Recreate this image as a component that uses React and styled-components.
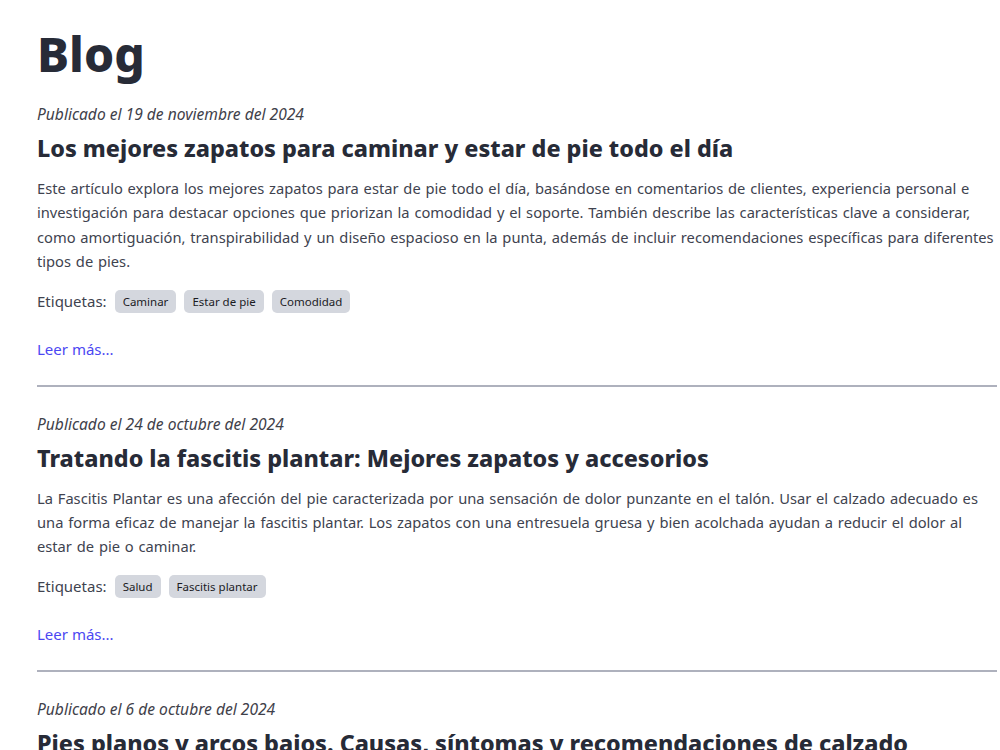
import React from 'react'
import styled, { createGlobalStyle } from 'styled-components'

const GlobalStyle = createGlobalStyle`
  html, body {
    margin: 0;
    padding: 0;
    background: #ffffff;
    overflow-x: hidden;
  }
  body {
    font-family: "Noto Sans", "Open Sans", sans-serif;
  }
`

const Page = styled.main`
  width: 960px;
  padding: 22px 0 0 37px;
`

const PageTitle = styled.h1`
  margin: 0 0 16px;
  font-size: 48px;
  line-height: 64px;
  font-weight: 800;
  color: #272b37;
`

const Post = styled.article`
  border-bottom: ${(p) => (p.$last ? 'none' : '2px solid #aeb1bd')};
  padding-bottom: 24px;
  margin-bottom: 25px;
`

const PostDate = styled.p`
  margin: 0;
  font-size: 15.6px;
  line-height: 24px;
  font-style: italic;
  color: #3f414a;
`

const PostTitle = styled.h2`
  margin: 6px 0 12px;
  font-size: 23.3px;
  line-height: 32px;
  font-weight: 800;
  color: #272b37;
`

const Summary = styled.p`
  margin: 0 0 16px;
  font-size: 14.7px;
  line-height: 24.4px;
  word-spacing: 1px;
  color: #40434f;
`

const TagRow = styled.div`
  display: flex;
  align-items: center;
  gap: 8px;
  font-size: 15px;
  color: #40434f;
`

const Tag = styled.span`
  display: inline-block;
  padding: 3px 8px;
  border-radius: 5px;
  background: #d4d7de;
  color: #1b1b1f;
  font-size: 11.5px;
  line-height: 17px;
`

const ReadMore = styled.a`
  display: inline-block;
  margin-top: 24px;
  font-size: 15px;
  line-height: 24px;
  color: #4b47f2;
  text-decoration: none;
`

const posts = [
  {
    date: 'Publicado el 19 de noviembre del 2024',
    title: 'Los mejores zapatos para caminar y estar de pie todo el día',
    summary:
      'Este artículo explora los mejores zapatos para estar de pie todo el día, basándose en comentarios de clientes, experiencia personal e investigación para destacar opciones que priorizan la comodidad y el soporte. También describe las características clave a considerar, como amortiguación, transpirabilidad y un diseño espacioso en la punta, además de incluir recomendaciones específicas para diferentes tipos de pies.',
    tags: ['Caminar', 'Estar de pie', 'Comodidad'],
  },
  {
    date: 'Publicado el 24 de octubre del 2024',
    title: 'Tratando la fascitis plantar: Mejores zapatos y accesorios',
    summary:
      'La Fascitis Plantar es una afección del pie caracterizada por una sensación de dolor punzante en el talón. Usar el calzado adecuado es una forma eficaz de manejar la fascitis plantar. Los zapatos con una entresuela gruesa y bien acolchada ayudan a reducir el dolor al estar de pie o caminar.',
    tags: ['Salud', 'Fascitis plantar'],
  },
  {
    date: 'Publicado el 6 de octubre del 2024',
    title: 'Pies planos y arcos bajos. Causas, síntomas y recomendaciones de calzado',
    summary:
      'Los pies planos son una condición común en la que el arco del pie se aplana total o parcialmente. Conocer sus causas y síntomas ayuda a elegir el calzado con el soporte adecuado.',
    tags: ['Salud', 'Pies planos'],
  },
]

export default function App() {
  return (
    <>
      <GlobalStyle />
      <Page>
        <PageTitle>Blog</PageTitle>
        {posts.map((post, i) => (
          <Post key={post.date} $last={i === posts.length - 1}>
            <PostDate>{post.date}</PostDate>
            <PostTitle>{post.title}</PostTitle>
            <Summary>{post.summary}</Summary>
            <TagRow>
              Etiquetas:
              {post.tags.map((t) => (
                <Tag key={t}>{t}</Tag>
              ))}
            </TagRow>
            <ReadMore href="#">Leer más...</ReadMore>
          </Post>
        ))}
      </Page>
    </>
  )
}
